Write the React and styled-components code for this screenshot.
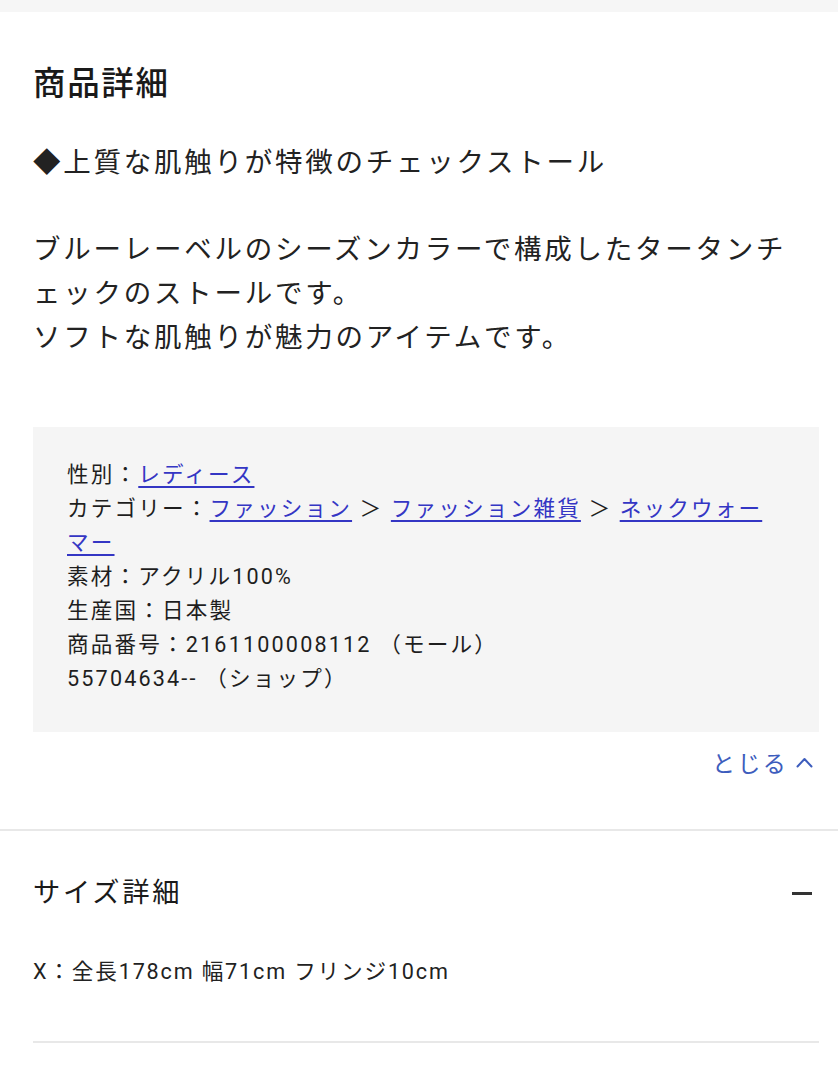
import React from "react";
import styled, { createGlobalStyle } from "styled-components";

const Global = createGlobalStyle`
  html, body { margin: 0; padding: 0; background: #fff; }
  body {
    font-family: "Roboto", "Noto Sans CJK JP", sans-serif;
    color: #222;
    -webkit-font-smoothing: antialiased;
  }
  * { box-sizing: border-box; }
`;

const TopStrip = styled.div`
  height: 12px;
  background: #f6f6f6;
`;

const Section = styled.section`
  padding: 0 19px 0 33px;
  border-bottom: ${(p) => (p.$divider ? "2px solid #e8e8e8" : "none")};
  padding-bottom: ${(p) => p.$pb || 0}px;
`;

const Heading = styled.h2`
  margin: ${(p) => p.$mt}px 0 0;
  font-size: 32.5px;
  line-height: 44px;
  font-weight: 500;
  letter-spacing: 0.05em;
  color: #1a1a1a;
`;

const Lead = styled.p`
  margin: 35px 0 0;
  font-size: 27.5px;
  line-height: 44px;
  letter-spacing: 0.1em;
`;

const Body = styled.p`
  margin: 43px 0 0;
  padding-right: 14px;
  font-size: 27.5px;
  line-height: 44px;
  letter-spacing: 0.1em;
`;

const SpecBox = styled.div`
  margin-top: 67px;
  height: 305px;
  background: #f5f5f5;
  padding: 31px 34px 0 34px;
  font-size: 21.6px;
  line-height: 34px;
  letter-spacing: 0.1em;
  color: #1e1e1e;
`;

const SpecLine = styled.div``;

const Link = styled.a`
  color: #3436c4;
  text-decoration: underline;
  text-underline-offset: 4px;
  text-decoration-thickness: 1.5px;
`;

const CloseRow = styled.div`
  margin-top: 13px;
  display: flex;
  justify-content: flex-end;
  align-items: center;
  height: 34px;
`;

const CloseButton = styled.button`
  border: none;
  background: none;
  padding: 0;
  display: flex;
  align-items: center;
  gap: 8px;
  color: #3d5dbd;
  font-family: "Noto Sans CJK JP", sans-serif;
  font-size: 23px;
  letter-spacing: 0.1em;
  margin-right: 6px;
  cursor: pointer;
`;

const SubHeadRow = styled.div`
  margin-top: 42px;
  display: flex;
  justify-content: space-between;
  align-items: center;
  height: 40px;
`;

const SubHeading = styled.h3`
  margin: 0;
  font-size: 27.3px;
  line-height: 40px;
  font-weight: 400;
  letter-spacing: 0.1em;
  color: #1a1a1a;
`;

const Minus = styled.span`
  display: block;
  width: 20px;
  height: 3px;
  background: #333;
  margin-right: 7px;
`;

const SizeText = styled.p`
  margin: 42px 0 0;
  font-size: 21.6px;
  line-height: 34px;
  letter-spacing: 0.085em;
`;

const Rule = styled.hr`
  margin: 52px 0 0;
  border: none;
  height: 2px;
  background: #e8e8e8;
`;

export default function App() {
  return (
    <>
      <Global />
      <TopStrip />
      <Section $divider $pb={50}>
        <Heading $mt={50}>商品詳細</Heading>
        <Lead>◆上質な肌触りが特徴のチェックストール</Lead>
        <Body>
          ブルーレーベルのシーズンカラーで構成したタータンチェックのストールです。
          <br />
          ソフトな肌触りが魅力のアイテムです。
        </Body>
        <SpecBox>
          <SpecLine>
            性別：<Link href="#">レディース</Link>
          </SpecLine>
          <SpecLine>
            カテゴリー：<Link href="#">ファッション</Link> ＞ <Link href="#">ファッション雑貨</Link> ＞ <Link href="#">ネックウォーマー</Link>
          </SpecLine>
          <SpecLine>素材：アクリル100%</SpecLine>
          <SpecLine>生産国：日本製</SpecLine>
          <SpecLine>商品番号：2161100008112 （モール）</SpecLine>
          <SpecLine>55704634-- （ショップ）</SpecLine>
        </SpecBox>
        <CloseRow>
          <CloseButton>
            とじる
            <svg width="17" height="11" viewBox="0 0 17 11" fill="none">
              <polyline points="1.5,9.5 8.5,2 15.5,9.5" stroke="#3d5dbd" strokeWidth="2" strokeLinecap="round" strokeLinejoin="round" />
            </svg>
          </CloseButton>
        </CloseRow>
      </Section>
      <Section>
        <SubHeadRow>
          <SubHeading>サイズ詳細</SubHeading>
          <Minus />
        </SubHeadRow>
        <SizeText>X：全長178cm 幅71cm フリンジ10cm</SizeText>
        <Rule />
      </Section>
    </>
  );
}
